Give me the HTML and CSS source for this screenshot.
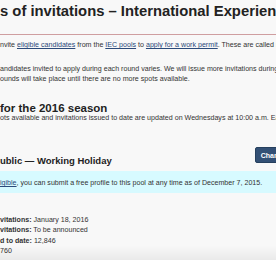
FILE: index.html
```html
<!DOCTYPE html>
<html lang="en">

<head>
    <meta charset="UTF-8">
    <meta name="viewport" content="width=device-width, initial-scale=1.0">
    <title>Rounds of invitations – International Experience Canada</title>

    <link rel="stylesheet" href="styles.css">
</head>

<body>
    <main class="content">
        <h1 class="page-title">s of invitations – International Experience Canada</h1>

        <p class="lead">nvite <a href="#">eligible candidates</a> from the <a href="#">IEC pools</a> to <a href="#">apply for a work permit</a>. These are called rounds of invitations.</p>

        <p class="lead">
            <span class="line">andidates invited to apply during each round varies. We will issue more invitations during the season.</span>
            <span class="line">ounds will take place until there are no more spots available.</span>
        </p>

        <h2 class="season-title">for the 2016 season</h2>
        <p class="note">ots available and invitations issued to date are updated on Wednesdays at 10:00 a.m. Eastern Time.</p>

        <section class="pool">
            <div class="pool-head">
                <h3 class="pool-title">ublic — Working Holiday</h3>
                <button class="btn-change">Change country</button>
            </div>

            <div class="alert-info">
                <a href="#">igible</a>, you can submit a free profile to this pool at any time as of December 7, 2015.
            </div>

            <ul class="stats">
                <li><strong>vitations:</strong> January 18, 2016</li>
                <li><strong>vitations:</strong> To be announced</li>
                <li><strong>d to date:</strong> 12,846</li>
                <li>760</li>
            </ul>
        </section>
    </main>

    <div class="fade"></div>
</body>

</html>
```

FILE: styles.css
```css
body {
    font-family: 'Liberation Sans', Arial, sans-serif;
    background-color: #f8f8f8;
    color: #333;
    margin: 0;
    overflow: hidden;
}

.content {
    width: 320px;
    white-space: nowrap;
}

a {
    color: #2b4a7a;
}

.page-title {
    margin: 0;
    padding-bottom: 12px;
    font-size: 14.8px;
    line-height: 22px;
    color: #222;
    border-bottom: 1px solid #cf9ea0;
}

.lead {
    margin: 5px 0 0;
    font-size: 7.1px;
    line-height: 10px;
}

.lead + .lead {
    margin-top: 14px;
}

.line {
    display: block;
}

.season-title {
    margin: 18px 0 0;
    font-size: 11.5px;
    line-height: 12px;
    color: #222;
}

.note {
    margin: 0;
    font-size: 7.1px;
    line-height: 8px;
}

.pool {
    margin-top: 24px;
}

.pool-head {
    display: flex;
    justify-content: space-between;
    align-items: flex-start;
}

.pool-title {
    margin: 9px 0 0;
    font-size: 9.5px;
    line-height: 12px;
    color: #222;
}

.btn-change {
    margin: 1px 0 0 auto;
    padding: 0 5px;
    height: 16px;
    font-family: inherit;
    font-size: 7px;
    font-weight: bold;
    color: #fff;
    background-color: #335075;
    border: 1px solid #26405e;
    border-radius: 2px;
}

.alert-info {
    margin-top: 4px;
    padding: 7px 0 5px;
    font-size: 7.1px;
    line-height: 10px;
    background-color: #d7faff;
}

.stats {
    list-style: none;
    margin: 22px 0 0;
    padding: 0;
    font-size: 7.1px;
    line-height: 10.3px;
}

.fade {
    position: fixed;
    left: 0;
    right: 0;
    bottom: 0;
    height: 14px;
    background: linear-gradient(rgba(0, 0, 0, 0), rgba(0, 0, 0, 0.06));
}
```
